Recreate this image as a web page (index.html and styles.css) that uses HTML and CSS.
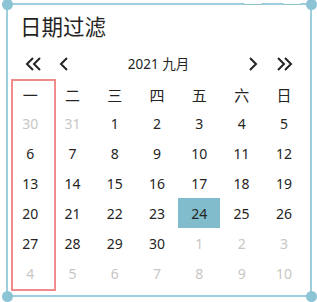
FILE: index.html
```html
<!DOCTYPE html>
<html lang="zh">
<head>
<meta charset="utf-8">
<title>日期过滤</title>
<link rel="stylesheet" href="styles.css">
</head>
<body>
<div class="widget">
  <h1 class="title">日期过滤</h1>
  <div class="nav">
    <span class="btn dbl"><svg width="17" height="14" viewBox="0 0 17 14"><polyline points="8,1 2,7 8,13"/><polyline points="15,1 9,7 15,13"/></svg></span>
    <span class="btn single prev"><svg width="9" height="14" viewBox="0 0 9 14"><polyline points="8,1 2,7 8,13"/></svg></span>
    <span class="label">2021 九月</span>
    <span class="btn single next"><svg width="9" height="14" viewBox="0 0 9 14"><polyline points="1,1 7,7 1,13"/></svg></span>
    <span class="btn dbl next-dbl"><svg width="17" height="14" viewBox="0 0 17 14"><polyline points="2,1 8,7 2,13"/><polyline points="9,1 15,7 9,13"/></svg></span>
  </div>
  <div class="grid">
    <div class="wd">一</div><div class="wd">二</div><div class="wd">三</div><div class="wd">四</div><div class="wd">五</div><div class="wd">六</div><div class="wd">日</div>
    <div class="d off">30</div><div class="d off">31</div><div class="d">1</div><div class="d">2</div><div class="d">3</div><div class="d">4</div><div class="d">5</div>
    <div class="d">6</div><div class="d">7</div><div class="d">8</div><div class="d">9</div><div class="d">10</div><div class="d">11</div><div class="d">12</div>
    <div class="d">13</div><div class="d">14</div><div class="d">15</div><div class="d">16</div><div class="d">17</div><div class="d">18</div><div class="d">19</div>
    <div class="d">20</div><div class="d">21</div><div class="d">22</div><div class="d">23</div><div class="d sel">24</div><div class="d">25</div><div class="d">26</div>
    <div class="d">27</div><div class="d">28</div><div class="d">29</div><div class="d">30</div><div class="d off">1</div><div class="d off">2</div><div class="d off">3</div>
    <div class="d off">4</div><div class="d off">5</div><div class="d off">6</div><div class="d off">7</div><div class="d off">8</div><div class="d off">9</div><div class="d off">10</div>
  </div>
  <div class="col-mark"></div>
  <div class="frame">
    <span class="pill pill-a"></span>
    <span class="pill pill-b"></span>
    <span class="dot tl"></span><span class="dot tr"></span><span class="dot bl"></span><span class="dot br"></span>
  </div>
</div>
</body>
</html>
```
FILE: styles.css
```css
html, body {
  margin: 0;
  padding: 0;
  background: #ffffff;
}
.widget {
  position: relative;
  width: 317px;
  height: 302px;
  overflow: hidden;
  font-family: "Segoe UI", "Noto Sans", "Noto Sans CJK SC", sans-serif;
  color: #252423;
}
.title {
  margin: 0;
  padding: 12px 0 0 20px;
  font-family: "Noto Sans CJK SC", sans-serif;
  font-weight: 400;
  font-size: 21.5px;
  line-height: 28px;
  height: 28px;
}
.nav {
  display: flex;
  align-items: center;
  height: 14px;
  margin-top: 17px;
  padding: 0 24px 0 25px;
}
.btn {
  display: flex;
}
.btn svg polyline {
  fill: none;
  stroke: #252423;
  stroke-width: 2;
  stroke-linecap: butt;
  stroke-linejoin: miter;
}
.prev {
  margin-left: 17px;
}
.label {
  flex: 1;
  text-align: center;
  font-family: "Segoe UI", "Noto Sans", "Noto Sans CJK SC", sans-serif;
  font-size: 13.5px;
  line-height: 14px;
}
.next-dbl {
  margin-left: 18px;
}
.grid {
  display: grid;
  grid-template-columns: repeat(7, 42.3px);
  grid-template-rows: 28px repeat(6, 30px);
  margin: 9px 0 0 9px;
}
.wd, .d {
  display: flex;
  align-items: center;
  justify-content: center;
}
.wd {
  font-family: "Noto Sans CJK SC", sans-serif;
  font-size: 15px;
}
.d {
  font-size: 14px;
}
.d.off {
  color: #c8c6c4;
}
.d.sel {
  background: #80bccc;
}
.col-mark {
  position: absolute;
  left: 11px;
  top: 79px;
  width: 45px;
  height: 212px;
  box-sizing: border-box;
  border: 2px solid #f28b8b;
}
.frame {
  position: absolute;
  left: 6px;
  top: 3px;
  width: 306px;
  height: 294px;
  box-sizing: border-box;
  border: 2px solid #9ccfdb;
}
.pill {
  position: absolute;
  top: -6px;
  width: 24px;
  height: 5px;
  background: #ffffff;
  border-radius: 0 0 6px 6px;
  box-shadow: 0 1px 1px rgba(0, 0, 0, 0.07);
}
.pill-a { left: 233px; }
.pill-b { left: 272px; }
.dot {
  position: absolute;
  width: 11px;
  height: 11px;
  border-radius: 50%;
  background: #8cc4d5;
}
.tl { left: -6.5px; top: -6.5px; }
.tr { right: -6.5px; top: -6.5px; }
.bl { left: -6.5px; bottom: -6.5px; }
.br { right: -6.5px; bottom: -6.5px; }
```
